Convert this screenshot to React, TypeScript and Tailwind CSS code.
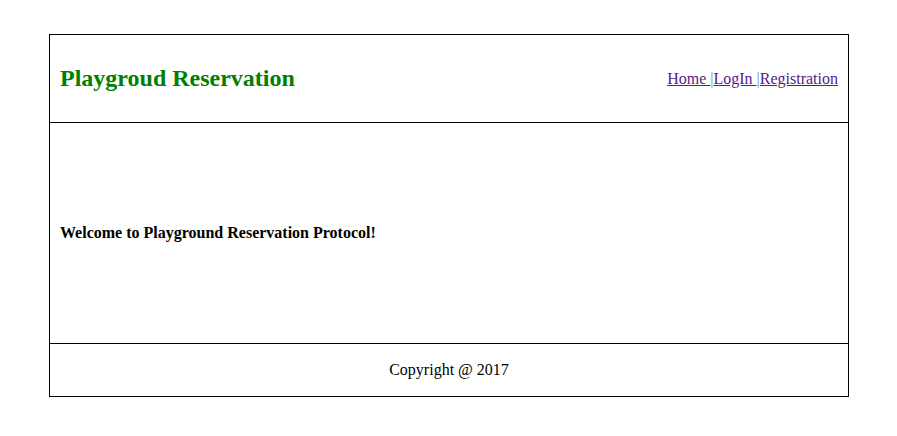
export default function App() {
  return (
    <div className="min-h-screen bg-white pt-[34px]" style={{ fontFamily: '"Liberation Serif", "Times New Roman", serif' }}>
      <div className="ml-[49px] w-[800px] border border-black text-black">
        <div className="flex h-[88px] items-center justify-between border-b border-black px-[10px]">
          <h2 className="-mt-[2px] text-[24px] font-bold leading-none text-[#008000]">Playgroud Reservation</h2>
          <nav className="text-[16px] leading-none">
            <a href="#" className="text-[#551A8B] underline">Home </a>
            <span className="text-[#7f8fa6]">|</span>
            <a href="#" className="text-[#551A8B] underline">LogIn </a>
            <span className="text-[#7f8fa6]">|</span>
            <a href="#" className="text-[#551A8B] underline">Registration</a>
          </nav>
        </div>
        <div className="flex h-[221px] items-center border-b border-black px-[10px]">
          <p className="text-[16px] font-bold">Welcome to Playground Reservation Protocol!</p>
        </div>
        <div className="flex h-[52px] items-center justify-center">
          <p className="text-[16px]">Copyright @ 2017</p>
        </div>
      </div>
    </div>
  );
}
